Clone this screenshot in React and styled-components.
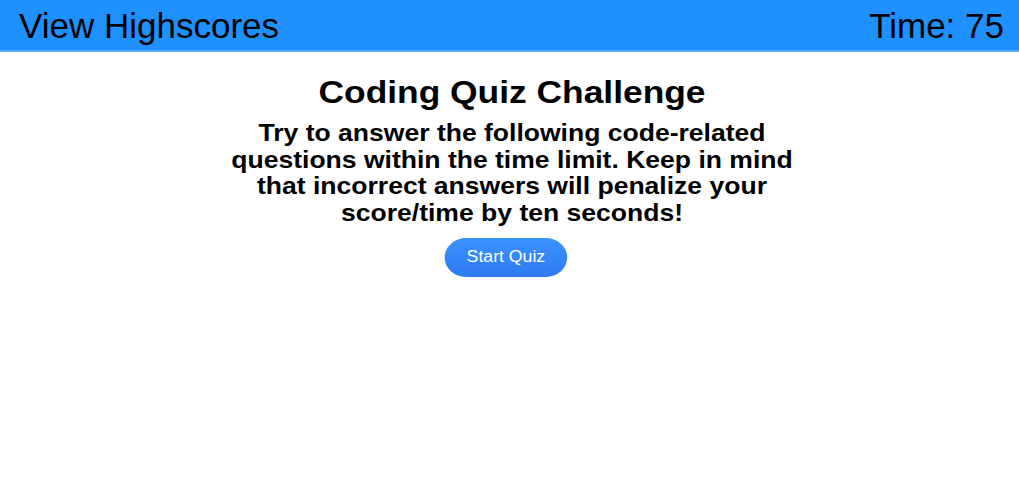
import React from "react";
import styled, { createGlobalStyle } from "styled-components";

const Global = createGlobalStyle`
  html, body { margin: 0; padding: 0; background: #fff; }
  body { font-family: "Liberation Sans", Arial, sans-serif; color: #000; }
`;

const Header = styled.header`
  display: flex;
  justify-content: space-between;
  align-items: center;
  height: 50px;
  padding: 0 15px 0 19px;
  background: #1e90ff;
  border-bottom: 2px solid #5aaeff;
  font-size: 35px;
`;

const HeaderText = styled.span`
  line-height: 1;
`;

const Main = styled.main`
  display: flex;
  justify-content: center;
  padding: 20px 0 0 4px;
`;

const Content = styled.section`
  display: flex;
  flex-direction: column;
  align-items: center;
  transform: scaleX(1.105);
  transform-origin: 50% 0;
`;

const Title = styled.h1`
  margin: 0;
  font-size: 32px;
  font-weight: bold;
  line-height: 40px;
`;

const Intro = styled.p`
  margin: 8px 0 0;
  width: 522px;
  text-align: center;
  font-size: 24px;
  font-weight: bold;
  line-height: 26.7px;
`;

const StartButton = styled.button`
  margin: 11px 11px 0 0;
  width: 111px;
  height: 39px;
  padding: 0;
  border: none;
  border-radius: 20px;
  background: linear-gradient(180deg, #3a92ff 0%, #2f7af0 100%);
  color: #fff;
  font-family: "Liberation Sans", Arial, sans-serif;
  font-size: 16px;
  cursor: pointer;
`;

export default function App() {
  return (
    <>
      <Global />
      <Header>
        <HeaderText>View Highscores</HeaderText>
        <HeaderText>Time: 75</HeaderText>
      </Header>
      <Main>
        <Content>
          <Title>Coding Quiz Challenge</Title>
          <Intro>
            Try to answer the following code-related questions within the time
            limit. Keep in mind that incorrect answers will penalize your
            score/time by ten seconds!
          </Intro>
          <StartButton>Start Quiz</StartButton>
        </Content>
      </Main>
    </>
  );
}
